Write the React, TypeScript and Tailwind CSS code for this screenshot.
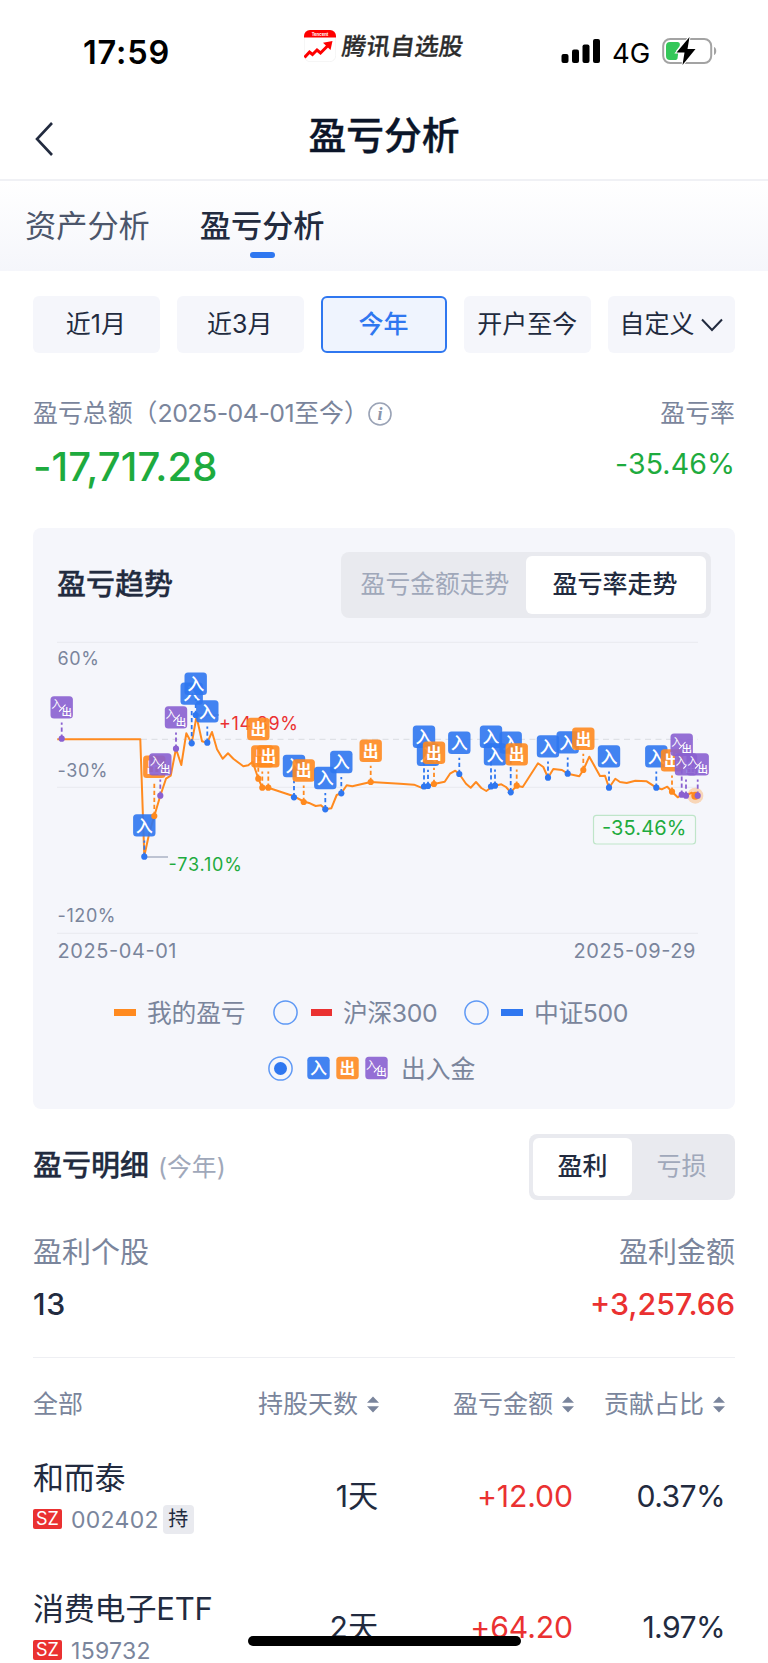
import clsx from "clsx"
import type { ReactNode } from "react"

type FlowKind = "in" | "out" | "both"

const FLOW_COLORS: Record<FlowKind, string> = {
  in: "#2f77f0",
  out: "#ff8a1f",
  both: "#8a60d0",
}

const RANGES = ["近1月", "近3月", "今年", "开户至今", "自定义"]

const TREND: [number, number][] = [
  [57.3, 739.3], [140.3, 739.3], [144.3, 856], [149.3, 833], [154.3, 816], [160.3, 795.7], [166, 778.7],
  [170.7, 775.7], [176, 748.7], [181.3, 765], [186.3, 733.3], [191.7, 743.3], [196.5, 716.5], [202, 741.3],
  [207.3, 742.7], [212, 732], [217, 749.3], [222.7, 758.7], [228, 753.3], [233.3, 758.7], [243.3, 766.3],
  [248.3, 765.3], [252.7, 761.7], [258.3, 778.7], [262.3, 787.7], [268.3, 787.7], [294, 796.3], [303.7, 801.5],
  [310, 803.3], [315.7, 806], [321, 805.3], [325.3, 809.3], [331.3, 808.3], [336.7, 795], [341.3, 793.3],
  [346.7, 785.3], [352.3, 786.3], [370.7, 782], [400, 783.7], [414, 784.7], [421.3, 787.7], [428, 786],
  [434, 784], [444.7, 781.7], [450, 773.7], [455.3, 770.7], [459.3, 774], [466, 783.7], [470.7, 787.7],
  [476, 782], [481.3, 788], [486.3, 791], [491.3, 787.3], [495, 785.7], [501.3, 784.3], [506, 787],
  [510.7, 792.3], [516.7, 785.7], [522.7, 787], [538, 763.3], [543.3, 767], [548, 777.7], [553.3, 769],
  [562, 770], [567.7, 773.7], [579.3, 776.3], [583.3, 770], [589.3, 756.7], [600, 776], [605, 775.7],
  [609, 787.7], [615.3, 778.7], [620, 782], [626.7, 783], [635.3, 780.7], [646.7, 781.3], [656.3, 787.7],
  [661.7, 789.3], [667.3, 786.7], [672, 791.7], [677.7, 797.3], [681.7, 794.7], [686, 795.7], [691.7, 792.7],
  [695.3, 795.7],
]

// x, y of the point on the line and the distance up to the badge centre
const FLOWS: [FlowKind, number, number, number][] = [
  ["both", 61.7, 738.7, 31.3],
  ["in", 144.3, 856.7, 31.3],
  ["out", 154.3, 816, 49.3],
  ["both", 160.3, 795.7, 31.3],
  ["both", 176, 748.7, 31.3],
  ["in", 191.7, 743.3, 49.7],
  ["in", 195.7, 715, 31.3],
  ["in", 207.3, 742.7, 31.3],
  ["out", 258.3, 778.7, 49.7],
  ["out", 262.3, 787.7, 31.3],
  ["out", 268.3, 787.7, 31.3],
  ["in", 294, 797.3, 31.3],
  ["out", 303.7, 802, 31.5],
  ["in", 325.3, 809.3, 31.3],
  ["in", 341.3, 793.3, 31.3],
  ["out", 370.7, 782, 31.3],
  ["in", 424, 786.5, 49.7],
  ["in", 428, 786, 31.3],
  ["out", 434, 784, 31.3],
  ["in", 459.3, 774, 31.3],
  ["in", 491, 786.5, 49.7],
  ["in", 510.7, 792.3, 49.7],
  ["in", 495, 785.7, 31.3],
  ["out", 516.7, 785.7, 31.3],
  ["in", 548, 777.7, 31.3],
  ["in", 567.7, 773.7, 31.3],
  ["out", 583.3, 770, 31.3],
  ["in", 609, 787.7, 31.3],
  ["in", 656.3, 787.7, 31.3],
  ["out", 672, 791.7, 31.3],
  ["both", 681.7, 794.7, 50],
  ["both", 686, 795.7, 31.3],
  ["both", 697.7, 795.7, 31.3],
]

const STOCKS = [
  { name: "和而泰", code: "002402", held: true, days: "1天", profit: "+12.00", share: "0.37%" },
  { name: "消费电子ETF", code: "159732", held: false, days: "2天", profit: "+64.20", share: "1.97%" },
]

// Badge drawn around its own centre, 22 units wide
function FlowBadge({ kind }: { kind: FlowKind }) {
  return (
    <g>
      <rect x="-11.2" y="-11.2" width="22.4" height="22.4" rx="3.5" fill={FLOW_COLORS[kind]} fillOpacity="0.9" />
      {kind === "both" ? (
        <g fill="#fff" textAnchor="middle">
          <text x="-5" y="0.8" fontSize="11">入</text>
          <text x="5" y="8.4" fontSize="10.5" fontWeight="500">出</text>
          <path d="M-2.6 4.3L3.8 -2.7" stroke="#fff" strokeWidth="1.1" />
        </g>
      ) : (
        <text
          y={kind === "in" ? 6.3 : 5.9}
          fontSize={kind === "in" ? 17 : 15.8}
          fontWeight={kind === "out" ? 700 : 500}
          fill="#fff"
          textAnchor="middle"
        >
          {kind === "in" ? "入" : "出"}
        </text>
      )}
    </g>
  )
}

function TrendChart() {
  const line = TREND.map(([x, y]) => `${x},${y}`).join(" ")
  return (
    <svg viewBox="33 630 702 340" className="block h-[340px] w-[702px]">
      <path d="M57 642.3H698M57 787.3H698M57 933.3H698" stroke="#ebecf1" strokeWidth="1.2" />
      <path d="M57 739.3H698" stroke="#dfe1e6" strokeWidth="1.2" strokeDasharray="6 4.5" />
      <g fill="#7a859c" fontSize="18" letterSpacing="0.6">
        <text x="57.5" y="664.8">60%</text>
        <text x="57.5" y="776.8">-30%</text>
        <text x="57.5" y="922.3">-120%</text>
      </g>
      <g fill="#7a859c" fontSize="20">
        <text x="57.5" y="957.7" textLength="119">2025-04-01</text>
        <text x="573.5" y="957.7" textLength="122">2025-09-29</text>
      </g>
      <polyline points={line} fill="none" stroke="#ff8a1f" strokeWidth="2" strokeLinejoin="round" />
      <path d="M196 715H219M145 857H168" stroke="#aab2c5" strokeWidth="1.4" />
      <text x="219" y="729.8" fontSize="18" textLength="79" fill="#ea3131">+14.89%</text>
      <text x="168.5" y="871.2" fontSize="18" textLength="73.5" fill="#1eab3e">-73.10%</text>
      <circle cx="695.3" cy="795.7" r="8" fill="#ff8a1f" fillOpacity="0.3" />
      <circle cx="695.3" cy="795.7" r="4" fill="#ff8a1f" />
      {FLOWS.map(([kind, x, y, lift]) => (
        <g key={`${x}-${y}`}>
          <path
            d={`M${x} ${y}V${y - lift + 15}`}
            stroke={FLOW_COLORS[kind]}
            strokeWidth="1.8"
            strokeDasharray="4.2 2.8"
          />
          <circle cx={x} cy={y} r="3.1" fill={FLOW_COLORS[kind]} />
          <g transform={`translate(${x} ${y - lift})`}>
            <FlowBadge kind={kind} />
          </g>
        </g>
      ))}
      <rect x="593.5" y="815.3" width="102" height="28.7" rx="3" fill="#f5f8fa" stroke="#bfe5c9" strokeWidth="1.2" />
      <text x="602" y="835" fontSize="20" textLength="84.5" fill="#1eab3e">-35.46%</text>
    </svg>
  )
}

function StatusBar() {
  return (
    <header className="flex h-[94px] items-start text-black">
      <div className="mt-[32px] ml-[83px] w-[221px] text-[32.5px] leading-[41px] font-semibold tracking-[0.8px]">17:59</div>
      <svg viewBox="0 0 32 32" className="mt-[30px] size-8">
        <rect x="0.3" y="0.3" width="31.4" height="31.4" rx="6" fill="#fff" stroke="#ececec" strokeWidth="0.6" />
        <path d="M0 7.5V6a6 6 0 0 1 6-6h20a6 6 0 0 1 6 6v1.5z" fill="#fe0000" />
        <text x="16" y="5.9" fontSize="4.2" fontWeight="700" fill="#fff" textAnchor="middle">Tencent</text>
        <path d="M0.5 27.5l5-5.5 3 2.5 4.5-4.5 3.500 3L25.500 14" fill="none" stroke="#fe0000" strokeWidth="3" />
        <path d="M19 12.8L28.5 11l-2 9z" fill="#fe0000" />
      </svg>
      <div className="mt-[29px] ml-[6px] w-[219px] -skew-x-8 text-[24px] leading-[36px] font-medium tracking-[0.3px] text-[#2c2c2c] [-webkit-text-stroke:0.3px]">
        腾讯自选股
      </div>
      <svg viewBox="0 0 40 24" className="mt-[39px] h-6 w-10">
        <rect x="0.5" y="15" width="7" height="9" rx="2" />
        <rect x="11" y="10.5" width="7" height="13.5" rx="2" />
        <rect x="21.5" y="5.5" width="7" height="18.5" rx="2" />
        <rect x="32" y="0" width="7" height="24" rx="2" />
      </svg>
      <div className="mt-[36px] ml-[11px] w-[50px] text-[27.5px] leading-[34px]">4G</div>
      <svg viewBox="0 0 56 28" className="mt-[37px] h-7 w-14">
        <rect x="1.2" y="2" width="48" height="24" rx="7" fill="none" stroke="#a3a3a3" strokeWidth="2" />
        <path d="M52 10v8c3-1 3-7 0-8z" fill="#a3a3a3" />
        <path d="M8 5h7.5c2.5 0 3 3 1.5 5l-3 4h2.5l-1 7.5c-0.5 1-1.5 1.500-2.5 1.500H8a4 4 0 0 1-4-4V9a4 4 0 0 1 4-4z" fill="#34c759" />
        <path d="M27.500 0L14.500 15.500h8L20.500 28 33.500 12h-8z" stroke="#fff" strokeWidth="2" paintOrder="stroke" />
      </svg>
    </header>
  )
}

function Segmented({ children, className }: { children: ReactNode; className?: string }) {
  return (
    <div className={clsx("flex h-[66px] rounded-lg bg-[#e9eaef] p-1 text-[25px]", className)}>{children}</div>
  )
}

function SortIcon() {
  return (
    <svg viewBox="0 0 12 17" className="ml-[9px] h-[17px] w-3" fill="#7a859c">
      <path d="M6 0.5L12 6.8H0z" />
      <path d="M6 16.5L12 10.2H0z" />
    </svg>
  )
}

function Radio({ checked }: { checked?: boolean }) {
  return (
    <svg viewBox="0 0 25 25" className="size-[25px] shrink-0">
      <circle cx="12.5" cy="12.5" r="11.6" fill="none" stroke="#5f99f5" strokeWidth="1.5" />
      {checked && <circle cx="12.5" cy="12.5" r="6.5" fill="#2f77f0" />}
    </svg>
  )
}

export default function App() {
  return (
    <main className="relative h-[1663px] w-[768px] overflow-hidden bg-white font-['Inter','Noto_Sans_CJK_SC',sans-serif] text-[#222b3f]">
      <StatusBar />

      <div className="relative flex h-[85px] justify-center">
        <svg viewBox="0 0 18 34" className="absolute top-[28px] left-[35px] h-[34px] w-[18px]">
          <path d="M17 1L2 17l15 16" fill="none" stroke="#222b3f" strokeWidth="2.6" />
        </svg>
        <h1 className="mt-[14px] text-[37.8px] leading-[54px] font-medium text-[#0b1529] [-webkit-text-stroke:0.4px]">盈亏分析</h1>
      </div>

      <nav className="flex h-[92px] gap-[50px] border-t-2 border-[#f0f1f5] bg-linear-to-b from-white to-[#f5f6fb] pl-[25px] text-[31.2px] leading-[44px]">
        <span className="mt-[23px] text-[#4c566b]">资产分析</span>
        <span className="mt-[23px] flex flex-col items-center font-medium">
          盈亏分析
          <span className="mt-[4px] h-[6px] w-[25px] rounded-[3px] bg-[#2f77f0]" />
        </span>
      </nav>

      <section className="px-[33px]">
        <div className="mt-[25px] grid h-[57px] grid-cols-5 gap-[17px] text-[25px]">
          {RANGES.map((range) => (
            <button
              key={range}
              className={clsx(
                "flex items-center justify-center rounded-md pr-px whitespace-nowrap",
                range === "今年" ? "border-2 border-[#2f77f0] bg-[#eff4fe] font-medium text-[#2f77f0]" : "bg-[#f5f6fb]",
              )}
            >
              {range}
              {range === "自定义" && (
                <svg viewBox="0 0 22 14" className="ml-[6px] h-[14px] w-[22px]">
                  <path d="M1 1.5L11 12l10-10.5" fill="none" stroke="#222b3f" strokeWidth="2" />
                </svg>
              )}
            </button>
          ))}
        </div>

        <div className="mt-[43px] flex h-9 items-center justify-between text-[24.9px] text-[#7a859c]">
          <div className="flex items-center">
            <span className="whitespace-nowrap">
              盈亏总额（<span className="tracking-[-0.5px]">2025-04-01</span>至今）
            </span>
            <svg viewBox="0 0 24 24" className="-ml-px size-6">
              <circle cx="12" cy="12" r="11" fill="none" stroke="#9aa3b6" strokeWidth="1.6" />
              <text x="12" y="18" fontSize="18" fontStyle="italic" fontWeight="700" fill="#8a94a9" textAnchor="middle" className="font-['Liberation_Serif',serif]">
                i
              </text>
            </svg>
          </div>
          <span>盈亏率</span>
        </div>
        <div className="mt-[8px] flex h-[54px] justify-between text-[#1eab3e]">
          <span className="text-[40px] leading-[54px] font-medium tracking-[0.1px]">-17,717.28</span>
          <span className="text-[28.5px] leading-[47px] tracking-[0.1px]">-35.46%</span>
        </div>
      </section>

      <section className="mx-[33px] mt-[34px] h-[581px] rounded-lg bg-[#f5f6fb]">
        <div className="flex h-[102px] items-start justify-between pt-6 pr-6 pl-6">
          <h2 className="mt-[11px] text-[29px] leading-[44px] font-medium [-webkit-text-stroke:0.3px]">盈亏趋势</h2>
          <Segmented className="w-[370px]">
            <span className="flex w-[181px] items-center justify-center pr-px text-[24.8px] text-[#a0a8ba]">盈亏金额走势</span>
            <span className="flex w-[180px] items-center justify-center rounded-md bg-white pr-0.5 font-medium">
              盈亏率走势
            </span>
          </Segmented>
        </div>
        <TrendChart />
        <div className="mt-[24px] flex h-9 items-center pl-[81px] text-[24.8px] tracking-[-0.2px] text-[#7a859c]">
          <span className="h-[7px] w-[22px] bg-[#ff8a1f]" />
          <span className="ml-[11px] w-[126px] pt-[3px]">我的盈亏</span>
          <Radio />
          <span className="ml-[13px] h-[7px] w-[21px] bg-[#ea3131]" />
          <span className="ml-[11px] w-[121px] pt-[3px] tracking-[-0.4px]">沪深300</span>
          <Radio />
          <span className="ml-[12px] h-[7px] w-[22px] bg-[#2f77f0]" />
          <span className="ml-[11px] pt-[3px] tracking-[-0.4px]">中证500</span>
        </div>
        <div className="mt-[20px] flex h-9 items-center pl-[235px] text-[24.8px] text-[#7a859c]">
          <Radio checked />
          <svg viewBox="0 0 82 24" className="mr-[12px] ml-[14px] h-6 w-[82px]">
            <g transform="translate(11.5 12)">
              <FlowBadge kind="in" />
            </g>
            <g transform="translate(40.5 12)">
              <FlowBadge kind="out" />
            </g>
            <g transform="translate(69.5 12)">
              <FlowBadge kind="both" />
            </g>
          </svg>
          <span className="pt-[3px]">出入金</span>
        </div>
      </section>

      <section className="px-[33px]">
        <div className="mt-[25px] flex items-center justify-between">
          <div className="flex items-center">
            <h2 className="pb-[2px] text-[29px] leading-[44px] font-medium [-webkit-text-stroke:0.3px]">盈亏明细</h2>
            <span className="ml-[9px] pt-[2px] text-[24.8px] text-[#a0a8ba]">(今年)</span>
          </div>
          <Segmented className="w-[206px]">
            <span className="flex w-[99px] items-center justify-center rounded-md bg-white font-medium">盈利</span>
            <span className="flex w-[99px] items-center justify-center text-[#a0a8ba]">亏损</span>
          </Segmented>
        </div>

        <div className="mt-[31px] flex justify-between text-[29px] leading-[44px] text-[#7a859c]">
          <span>盈利个股</span>
          <span>盈利金额</span>
        </div>
        <div className="mt-[8px] flex justify-between text-[30.3px] leading-[42px] font-medium">
          <span className="tracking-[0.8px]">13</span>
          <span className="text-[#ea3131]">+3,257.66</span>
        </div>

        <div className="mt-[32px] grid h-[94px] grid-cols-[140px_206px_195px_151px] items-center border-t border-[#eeeff3] text-[25px] text-[#7a859c]">
          <span>全部</span>
          <span className="flex items-center justify-end">持股天数<SortIcon /></span>
          <span className="flex items-center justify-end">盈亏金额<SortIcon /></span>
          <span className="flex items-center justify-end">贡献占比<SortIcon /></span>
        </div>

        {STOCKS.map((stock) => (
          <div
            key={stock.code}
            className="grid h-[131px] grid-cols-[200px_145px_195px_151px] text-right text-[30.2px] leading-[42px] tracking-[-0.1px]"
          >
            <div className="text-left">
              <div className="mt-[5px] text-[31px] leading-[44px] tracking-[-0.2px] whitespace-nowrap">{stock.name}</div>
              <div className="mt-[4px] flex h-[30px] items-center tracking-[0.3px]">
                <span className="flex h-5 w-[29px] items-center justify-center rounded-[2px] bg-[#ea3131] text-[18px] leading-5 tracking-normal text-white">SZ</span>
                <span className="ml-[9px] w-[92px] pt-[2px] text-[23px] leading-[28px] text-[#7a859c]">{stock.code}</span>
                {stock.held && (
                  <span className="mt-px flex h-[29px] w-[31px] items-center justify-center rounded-sm bg-[#e9eaef] pb-px text-[20px]">持</span>
                )}
              </div>
            </div>
            <span className="mt-[24px]">{stock.days}</span>
            <span className="mt-[24px] text-[#ea3131]">{stock.profit}</span>
            <span className="mt-[24px] -mr-px tracking-[-0.6px]">{stock.share}</span>
          </div>
        ))}
      </section>

      <div className="absolute top-[1636px] left-[248px] h-[10px] w-[273px] rounded-full bg-black" />
    </main>
  )
}
